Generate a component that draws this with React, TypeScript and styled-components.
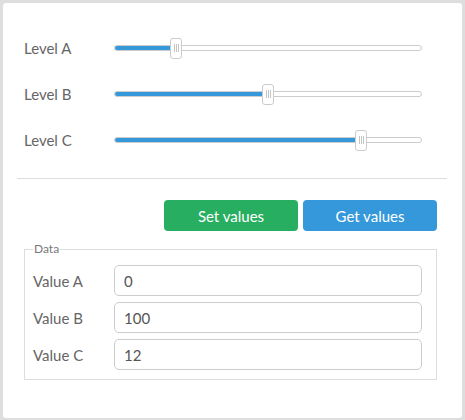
import React from 'react';
import styled, { createGlobalStyle } from 'styled-components';

const GlobalStyle = createGlobalStyle`
  html, body {
    margin: 0;
    padding: 0;
    background: #dedede;
  }
  body {
    font-family: Lato, "Liberation Sans", sans-serif;
  }
`;

type Level = { label: string; percent: number };
type Field = { label: string; value: string };

const levels: Level[] = [
  { label: 'Level A', percent: 19 },
  { label: 'Level B', percent: 50 },
  { label: 'Level C', percent: 81.4 },
];

const fields: Field[] = [
  { label: 'Value A', value: '0' },
  { label: 'Value B', value: '100' },
  { label: 'Value C', value: '12' },
];

const TRACK_WIDTH = 308;
const HANDLE_WIDTH = 12;

const Slider: React.FC<{ percent: number }> = ({ percent }) => {
  const left = Math.round(((TRACK_WIDTH - HANDLE_WIDTH) * percent) / 100);
  return (
    <SliderBox>
      <Track>
        <Fill style={{ width: left }} />
      </Track>
      <Handle style={{ left }}>
        <Grip />
        <Grip />
        <Grip />
      </Handle>
    </SliderBox>
  );
};

export default function App() {
  return (
    <Page>
      <GlobalStyle />
      <Panel>
        <Sliders>
          {levels.map((l) => (
            <SliderRow key={l.label}>
              <Label>{l.label}</Label>
              <Slider percent={l.percent} />
            </SliderRow>
          ))}
        </Sliders>
        <Divider />
        <Buttons>
          <Button $color="#27ae60">Set values</Button>
          <Button $color="#3498db">Get values</Button>
        </Buttons>
        <DataSet>
          <Legend>Data</Legend>
          {fields.map((f) => (
            <FieldRow key={f.label}>
              <FieldLabel>{f.label}</FieldLabel>
              <Input defaultValue={f.value} />
            </FieldRow>
          ))}
        </DataSet>
      </Panel>
    </Page>
  );
}

const Page = styled.div`
  padding: 3px;
  width: 459px;
`;

const Panel = styled.div`
  background: #fff;
  border-radius: 3px;
  height: 415px;
  display: flex;
  flex-direction: column;
`;

const Sliders = styled.div`
  padding: 22px 0 0 21px;
  display: flex;
  flex-direction: column;
`;

const SliderRow = styled.div`
  height: 46px;
  display: flex;
  align-items: center;
`;

const Label = styled.div`
  width: 90px;
  font-size: 15px;
  color: #666;
`;

const SliderBox = styled.div`
  position: relative;
  width: ${TRACK_WIDTH}px;
  height: 21px;
  display: flex;
  align-items: center;
`;

const Track = styled.div`
  width: 100%;
  height: 6px;
  box-sizing: border-box;
  border: 1px solid #cccccc;
  border-radius: 3px;
  background: #fff;
  overflow: hidden;
`;

const Fill = styled.div`
  height: 100%;
  background: #3498db;
`;

const Handle = styled.div`
  position: absolute;
  top: 0;
  width: ${HANDLE_WIDTH}px;
  height: 21px;
  box-sizing: border-box;
  border: 1px solid #cccccc;
  border-radius: 3px;
  background: #fff;
  display: flex;
  align-items: center;
  justify-content: center;
  gap: 1px;
`;

const Grip = styled.span`
  width: 1px;
  height: 8px;
  background: #c4c4c4;
`;

const Divider = styled.div`
  height: 1px;
  background: #dddddd;
  margin: 15px 15px 0 14px;
`;

const Buttons = styled.div`
  display: flex;
  justify-content: flex-end;
  gap: 5px;
  margin-top: 21px;
  padding-right: 25px;
`;

const Button = styled.button<{ $color: string }>`
  width: 134px;
  height: 31px;
  border: none;
  border-radius: 4px;
  background: ${(p) => p.$color};
  color: #fff;
  font-family: Lato, "Liberation Sans", sans-serif;
  font-size: 15px;
  cursor: pointer;
`;

const DataSet = styled.fieldset`
  margin: 11px 25px 0 21px;
  padding: 9px 14px 9px 8px;
  border: 1px solid #dddddd;
  display: flex;
  flex-direction: column;
  gap: 6px;
`;

const Legend = styled.legend`
  font-size: 12px;
  line-height: 14px;
  color: #777;
  padding: 0 1px;
`;

const FieldRow = styled.div`
  display: grid;
  grid-template-columns: 81px 308px;
  align-items: center;
`;

const FieldLabel = styled.div`
  font-size: 15px;
  color: #666;
`;

const Input = styled.input`
  height: 31px;
  box-sizing: border-box;
  border: 1px solid #cccccc;
  border-radius: 5px;
  padding: 0 9px;
  font-family: Lato, "Liberation Sans", sans-serif;
  font-size: 15px;
  color: #555;
  outline: none;
`;
